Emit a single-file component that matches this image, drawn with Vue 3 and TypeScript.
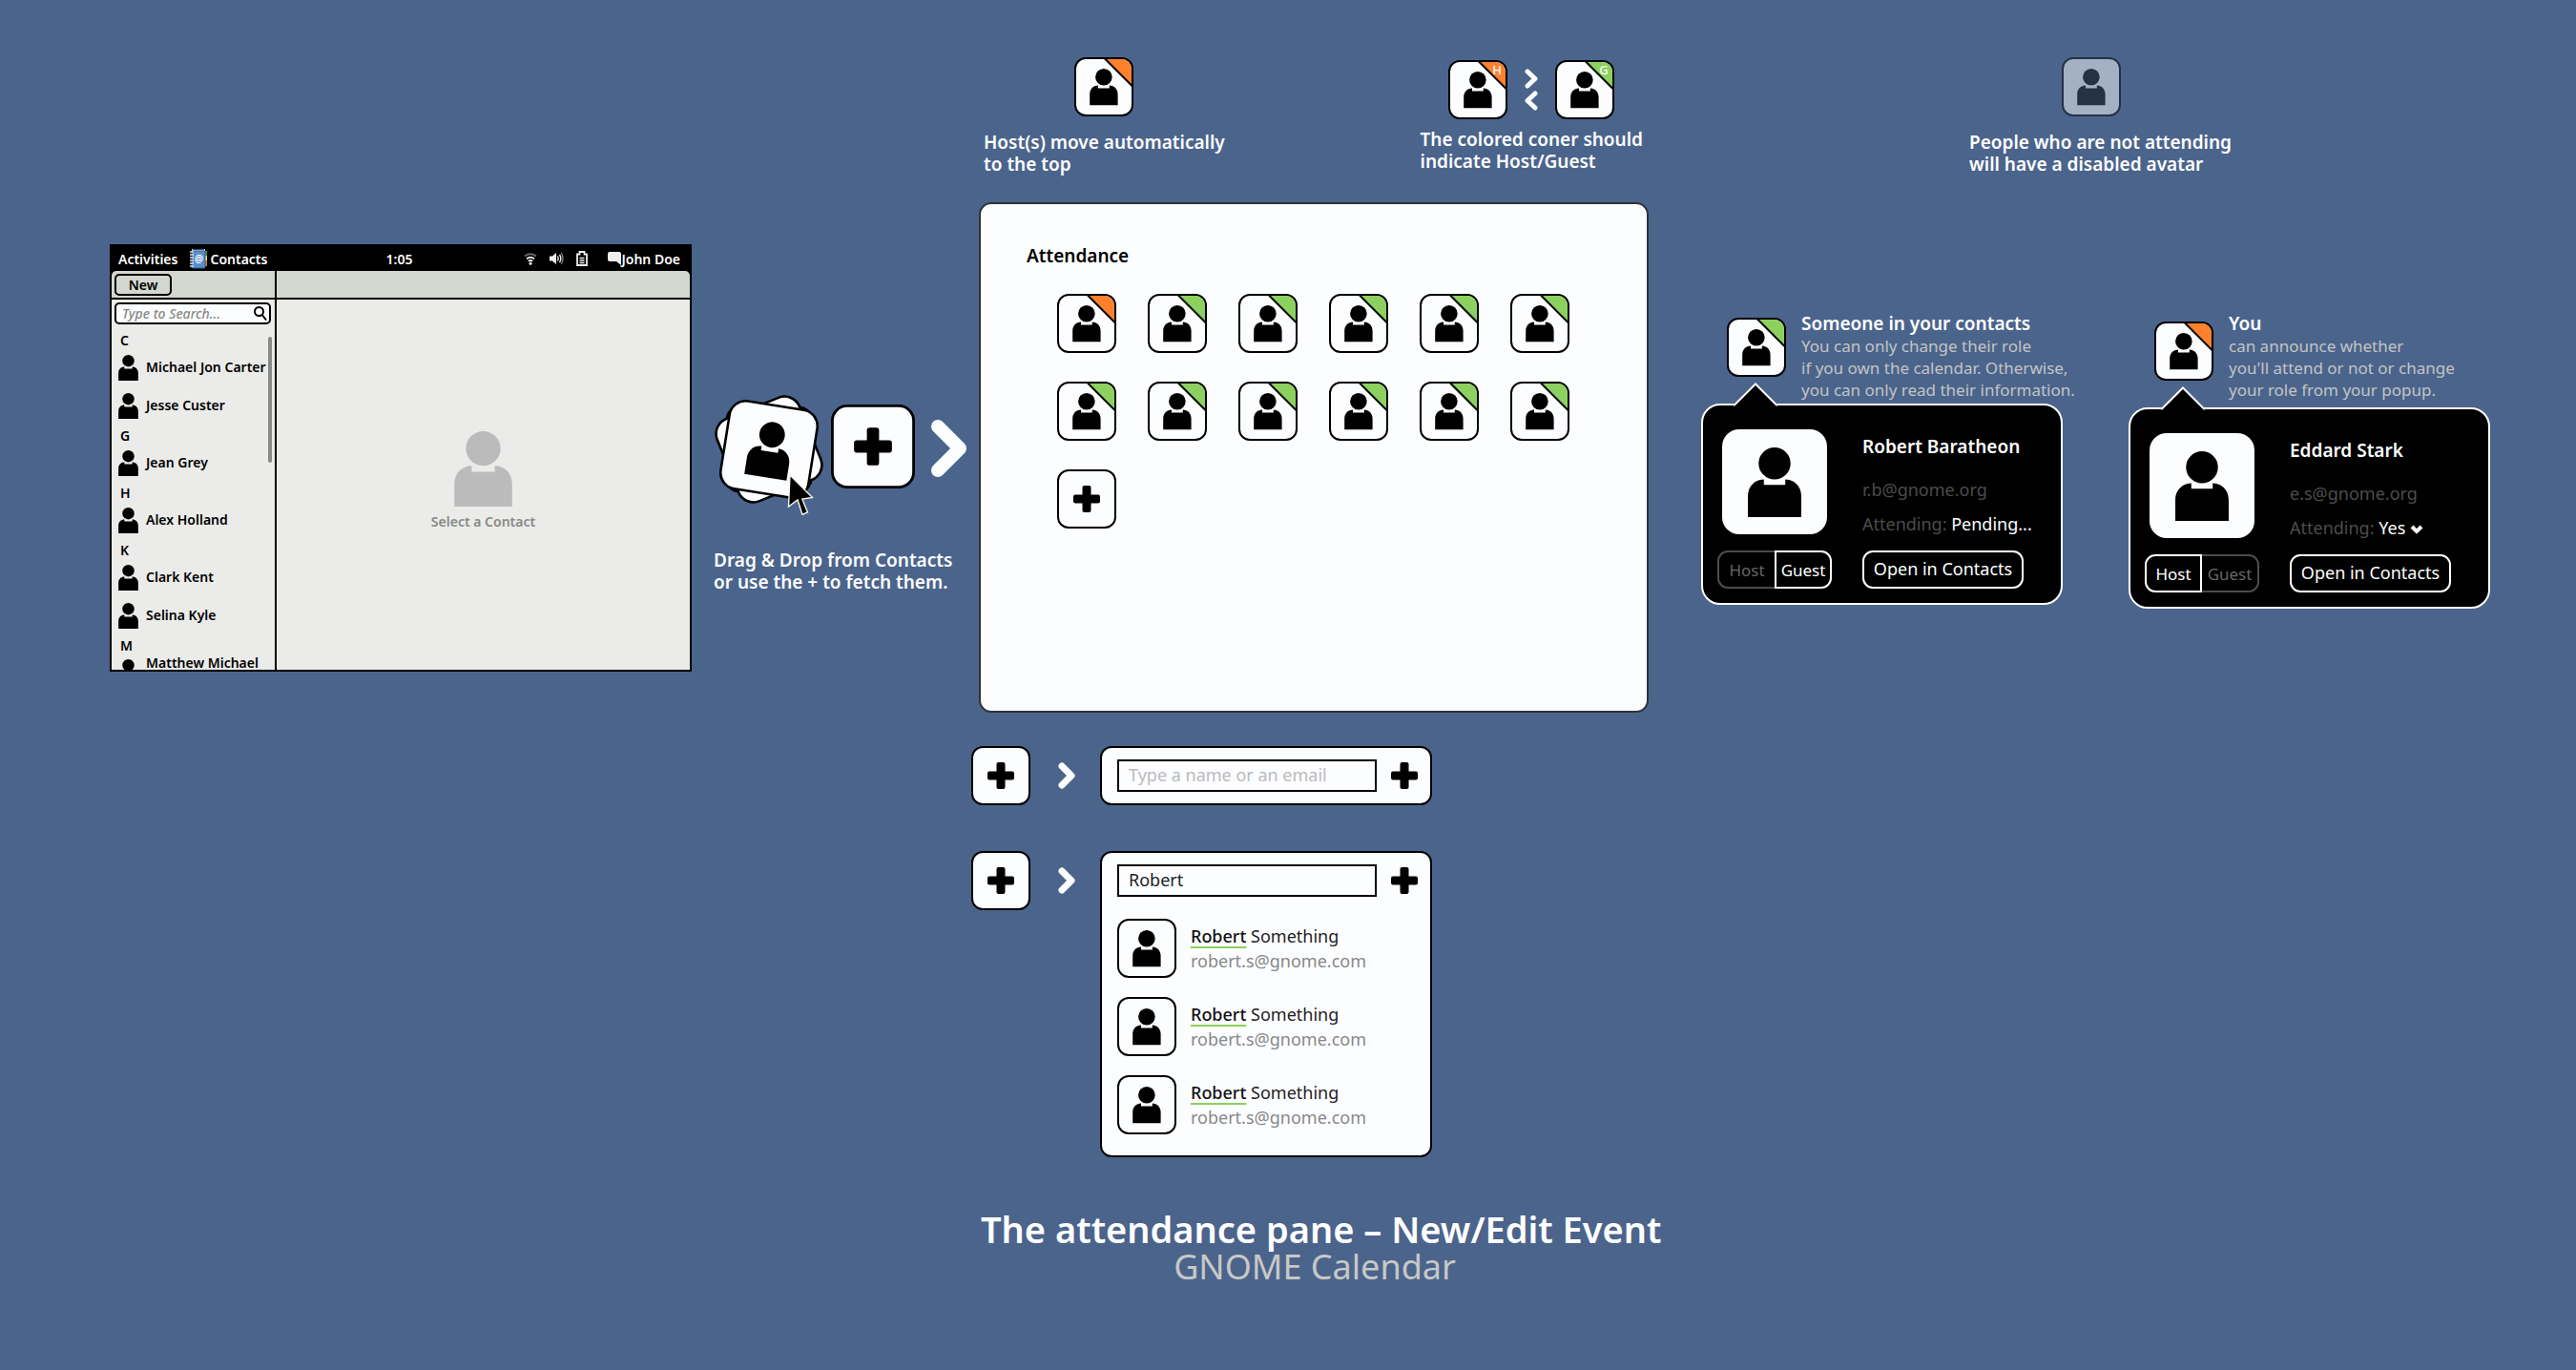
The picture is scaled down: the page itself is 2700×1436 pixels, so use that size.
<script setup lang="ts">
import { defineComponent, h, ref } from 'vue'

type Role = 'host' | 'guest'

const roleColor: Record<Role, string> = { host: '#ff812d', guest: '#8cd15f' }

const BODY = 'M0 218V152C0 122 22 100 50 100V117H117V100C145 100 167 122 167 152V218Z'

const personShapes = () => [
  h('circle', { cx: 83.5, cy: 50, r: 50 }),
  h('path', { d: BODY }),
]

const Person = defineComponent({
  setup: () => () => h('svg', { viewBox: '0 0 167 218', fill: 'currentColor', 'aria-hidden': 'true' }, personShapes()),
})

const tile = () => h('rect', { x: 1, y: 1, width: 60, height: 60, rx: 11, fill: '#fcfdff', stroke: '#000', 'stroke-width': 2 })

const Avatar = defineComponent({
  props: { role: String, letter: String },
  setup: (props) => () => h('svg', { viewBox: '0 0 62 62', 'aria-hidden': 'true' }, [
    tile(),
    h('g', { transform: 'translate(16.2 12) scale(.176)' }, personShapes()),
    props.role
      ? h('g', [
          h('path', { d: 'M32 2H50A10 10 0 0 1 60 12V30Z', fill: roleColor[props.role as Role] }),
          h('path', { d: 'M32 1.5L60.5 30', stroke: '#000', 'stroke-width': 2 }),
        ])
      : null,
    props.letter
      ? h('text', { x: 51, y: 15, 'text-anchor': 'middle', fill: '#fff', 'font-size': 13, 'font-weight': 500 }, props.letter)
      : null,
  ]),
})

const PlusTile = defineComponent({
  setup: () => () => h('svg', { viewBox: '0 0 62 62', 'aria-hidden': 'true' }, [
    tile(),
    h('rect', { x: 17, y: 26.5, width: 28, height: 9, rx: 2 }),
    h('rect', { x: 26.5, y: 17, width: 9, height: 28, rx: 2 }),
  ]),
})

const groups = [
  { letter: 'C', names: ['Michael Jon Carter', 'Jesse Custer'] },
  { letter: 'G', names: ['Jean Grey'] },
  { letter: 'H', names: ['Alex Holland'] },
  { letter: 'K', names: ['Clark Kent', 'Selina Kyle'] },
  { letter: 'M', names: ['Matthew Michael'] },
]

const attendees: Role[] = ['host', ...Array<Role>(11).fill('guest')]

const contactSearch = ref('')
const emptyQuery = ref('')
const query = ref('Robert')
const attending = ref('Yes')

const results = [1, 2, 3].map((id) => ({ id, match: 'Robert', rest: 'Something', email: 'robert.s@gnome.com' }))

const people: { id: string; title: string; lines: string[]; name: string; email: string; role: Role; editable: boolean }[] = [
  {
    id: 'contact',
    title: 'Someone in your contacts',
    lines: ['You can only change their role', 'if you own the calendar. Otherwise,', 'you can only read their information.'],
    name: 'Robert Baratheon',
    email: 'r.b@gnome.org',
    role: 'guest',
    editable: false,
  },
  {
    id: 'you',
    title: 'You',
    lines: ['can announce whether', "you'll attend or not or change", 'your role from your popup.'],
    name: 'Eddard Stark',
    email: 'e.s@gnome.org',
    role: 'host',
    editable: true,
  },
]
</script>

<template>
  <main class="board">
    <div class="notes">
      <section class="note">
        <Avatar class="avatar" role="host" />
        <p class="caption">Host(s) move automatically<br />to the top</p>
      </section>
      <section class="note note-roles">
        <div class="swap">
          <Avatar class="avatar" role="host" letter="H" />
          <svg class="swap-arrows" viewBox="0 0 14 44" aria-hidden="true">
            <path d="M3 3L11 10.500L3 18M11 26L3 33.500L11 41" />
          </svg>
          <Avatar class="avatar" role="guest" letter="G" />
        </div>
        <p class="caption">The colored coner should<br />indicate Host/Guest</p>
      </section>
    </div>

    <section class="note note-disabled">
      <Avatar class="avatar disabled" />
      <p class="caption">People who are not attending<br />will have a disabled avatar</p>
    </section>

    <section class="contacts">
      <header class="topbar">
        <div class="topbar-left">
          <span>Activities</span>
          <span class="app">
            <svg class="book" viewBox="0 0 20 22" aria-hidden="true">
              <path d="M14 3h5v5h-5z" fill="#4e9a06" /><path d="M14 8h5v5h-5z" fill="#fce94f" />
              <path d="M14 13h5v6h-5z" fill="#f57900" />
              <rect x="3" y="1" width="14" height="4" fill="#eee" />
              <path d="M4 1h12v1H4z" fill="#204a87" />
              <rect x="3" y="3" width="14" height="18" rx="1" fill="#5a8fcd" stroke="#2a5a9c" />
              <path d="M1 4h4M1 7h4M1 10h4M1 13h4M1 16h4M1 19h4" stroke="#ddd" stroke-width="1.500" />
              <text x="10.500" y="15" text-anchor="middle" font-size="10" fill="#fff">@</text>
            </svg>
            <span>Contacts</span>
          </span>
        </div>
        <span>1:05</span>
        <div class="topbar-right">
          <svg class="wifi" viewBox="0 0 14 14" aria-hidden="true">
            <g fill="none" stroke-width="1.800">
              <path d="M1 4.500Q7 0 13 4.500" stroke="#666" />
              <path d="M3 7.200Q7 4.300 11 7.200" stroke="#eee" />
              <path d="M4.800 9.800Q7 8.200 9.200 9.800" stroke="#eee" />
            </g>
            <circle cx="7" cy="12.300" r="1.500" fill="#eee" />
          </svg>
          <svg class="volume" viewBox="0 0 15 14" aria-hidden="true">
            <path d="M0 4.500h3L7 1v12L3 9.500H0z" fill="#eee" />
            <g fill="none" stroke-width="1.400">
              <path d="M8.500 4.500q1.500 2.500 0 5" stroke="#eee" />
              <path d="M10.500 2.800q2.600 4.200 0 8.400" stroke="#eee" />
              <path d="M12.300 1.200q3.400 5.800 0 11.600" stroke="#777" />
            </g>
          </svg>
          <svg class="battery" viewBox="0 0 12 16" aria-hidden="true">
            <path d="M3.500 3.500V1h5v2.500H11V15H1V3.500z" fill="none" stroke="#eee" stroke-width="1.800" />
            <path d="M3.500 7.500h5M3.500 10h5M3.500 12.500h5" stroke="#eee" stroke-width="1.400" />
          </svg>
          <span class="user">
            <svg class="chat" viewBox="0 0 14 14" aria-hidden="true">
              <path d="M2 0h10q2 0 2 2v12L9 10H2Q0 10 0 8V2Q0 0 2 0z" fill="#eee" />
            </svg>
            <span>John Doe</span>
          </span>
        </div>
      </header>
      <div class="window">
        <div class="toolbar toolbar-left"><button type="button" class="new">New</button></div>
        <div class="toolbar toolbar-right"></div>
        <aside class="sidebar">
          <label class="find">
            <input v-model="contactSearch" type="text" placeholder="Type to Search..." aria-label="Search contacts" />
            <svg viewBox="0 0 14 16" aria-hidden="true">
              <circle cx="5.500" cy="5.500" r="4.500" /><path d="M8.800 9L13 14.500" />
            </svg>
          </label>
          <div class="list">
            <div v-for="group in groups" :key="group.letter" class="group">
              <h3>{{ group.letter }}</h3>
              <ul>
                <li v-for="name in group.names" :key="name" :class="{ peek: group.letter === 'M' }">
                  <Person class="mini" /><span>{{ name }}</span>
                </li>
              </ul>
            </div>
            <span class="scroll"></span>
          </div>
        </aside>
        <div class="empty">
          <Person class="ghost" />
          <p>Select a Contact</p>
        </div>
      </div>
    </section>

    <section class="drag">
      <div class="drag-row">
        <svg class="stack" viewBox="0 0 116 126" aria-hidden="true">
          <g fill="#fcfdff" stroke="#000" stroke-width="2.600">
            <rect x="12.500" y="11.500" width="91" height="91" rx="17" transform="rotate(2 58 57)" />
            <rect x="11.500" y="10.500" width="93" height="93" rx="17" transform="rotate(-22 58 57)" />
            <rect x="11.500" y="10.500" width="93" height="93" rx="17" transform="rotate(9 58 57)" />
          </g>
          <g transform="rotate(9 58 57) translate(36.500 28) scale(.268)">
            <circle cx="83.500" cy="50" r="50" /><path :d="BODY" />
          </g>
          <path
            d="M80 84L78.500 117L88 110L93 125.500L98.500 123L92.800 109L103.500 107.500Z"
            fill="#000" stroke="#f4f4ee" stroke-width="1.400"
          />
        </svg>
        <PlusTile class="plus-big" />
        <svg class="arrow-big" viewBox="0 0 38 60" aria-hidden="true"><path d="M7 7L30 30L7 53" /></svg>
      </div>
      <p class="caption">Drag &amp; Drop from Contacts<br />or use the + to fetch them.</p>
    </section>

    <section class="panel">
      <h2>Attendance</h2>
      <div class="attendees">
        <Avatar v-for="(role, i) in attendees" :key="i" class="avatar" :role="role" />
        <button type="button" class="plain" aria-label="Add attendee"><PlusTile class="avatar" /></button>
      </div>
    </section>

    <section v-for="p in people" :key="p.id" class="person" :class="'person-' + p.id">
      <div class="intro">
        <Avatar class="avatar" :role="p.role" />
        <div class="about">
          <h3>{{ p.title }}</h3>
          <p v-for="line in p.lines" :key="line">{{ line }}</p>
        </div>
      </div>
      <div class="card">
        <svg class="tip" viewBox="0 0 46 26" aria-hidden="true">
          <path d="M1 26V23.500L23 1.500L45 23.500V26Z" fill="#000" />
          <path d="M0 23.500H1L23 1.500L45 23.500H46" fill="none" stroke="#fff" stroke-width="2" />
        </svg>
        <div class="card-left">
          <div class="portrait"><Person /></div>
          <div class="roles">
            <button type="button" :class="{ on: p.role === 'host' }">Host</button>
            <button type="button" :class="{ on: p.role === 'guest' }">Guest</button>
          </div>
        </div>
        <div class="card-right">
          <h4>{{ p.name }}</h4>
          <p class="mail">{{ p.email }}</p>
          <p v-if="!p.editable" class="status">Attending: <span>Pending...</span></p>
          <p v-else class="status">
            <label for="attending">Attending: </label>
            <span class="choice">
              <select id="attending" v-model="attending"><option>Yes</option><option>No</option></select>
              <svg viewBox="0 0 14 10" aria-hidden="true"><path d="M2 2L7 7L12 2" /></svg>
            </span>
          </p>
          <button type="button" class="open">Open in Contacts</button>
        </div>
      </div>
    </section>

    <section class="lookup">
      <div class="step">
        <button type="button" class="plain" aria-label="Add"><PlusTile class="avatar" /></button>
        <svg class="arrow" viewBox="0 0 18 28" aria-hidden="true"><path d="M4 4L14 14L4 24" /></svg>
        <div class="box">
          <div class="entry">
            <input v-model="emptyQuery" type="text" placeholder="Type a name or an email" aria-label="Name or email" />
            <button type="button" class="plain" aria-label="Add person">
              <svg class="plus" viewBox="0 0 28 28" aria-hidden="true">
                <rect y="9.500" width="28" height="9" rx="2" /><rect x="9.500" width="9" height="28" rx="2" />
              </svg>
            </button>
          </div>
        </div>
      </div>
      <div class="step">
        <button type="button" class="plain" aria-label="Add"><PlusTile class="avatar" /></button>
        <svg class="arrow" viewBox="0 0 18 28" aria-hidden="true"><path d="M4 4L14 14L4 24" /></svg>
        <div class="box">
          <div class="entry">
            <input v-model="query" type="text" aria-label="Name or email" />
            <button type="button" class="plain" aria-label="Add person">
              <svg class="plus" viewBox="0 0 28 28" aria-hidden="true">
                <rect y="9.500" width="28" height="9" rx="2" /><rect x="9.500" width="9" height="28" rx="2" />
              </svg>
            </button>
          </div>
          <ul class="results">
            <li v-for="r in results" :key="r.id">
              <Avatar class="avatar" />
              <div>
                <p class="result-name"><mark>{{ r.match }}</mark> {{ r.rest }}</p>
                <p class="result-mail">{{ r.email }}</p>
              </div>
            </li>
          </ul>
        </div>
      </div>
    </section>

    <footer class="title">
      <h1>The attendance pane – New/Edit Event</h1>
      <p>GNOME Calendar</p>
    </footer>
  </main>
</template>

<style>
html,
body {
  margin: 0;
  background: #4b648c;
}
</style>

<style scoped>
.board {
  display: grid;
  grid-template-columns:
    115fr minmax(0, 610fr) 23fr minmax(0, 278fr) minmax(0, 702fr)
    55fr minmax(0, 379fr) 69fr minmax(0, 379fr) 90fr;
  align-items: start;
  align-content: start;
  min-height: 100vh;
  box-sizing: border-box;
  padding: 60px 0 48px;
  color: #fff;
  font-family: "Noto Sans", "Open Sans", sans-serif;
  font-size: 18px;
}
h1, h2, h3, h4, p, ul {
  margin: 0;
  padding: 0;
}
ul {
  list-style: none;
}
svg {
  display: block;
  flex: none;
}
button, input, select {
  font: inherit;
  color: inherit;
  margin: 0;
  box-sizing: border-box;
}
.plain {
  padding: 0;
  border: 0;
  background: none;
  color: #000;
}
.avatar {
  width: 62px;
  height: 62px;
}
.caption {
  font-size: 19px;
  font-weight: 600;
  line-height: 23px;
  white-space: nowrap;
}

.notes {
  grid-column: 5;
  grid-row: 1;
  display: flex;
  justify-content: space-between;
  padding: 0 6px 0 5px;
  margin-bottom: 28px;
}
.note {
  display: flex;
  flex-direction: column;
  align-items: center;
  gap: 16px;
}
.note-roles {
  gap: 10px;
  padding-top: 3px;
}
.note-disabled {
  grid-column: 7 / 10;
  grid-row: 1;
  padding-left: 10px;
}
.disabled {
  margin-right: 20px;
  opacity: 0.5;
}
.swap {
  display: flex;
  align-items: center;
  gap: 18px;
}
.swap-arrows {
  width: 14px;
  height: 44px;
}
.swap-arrows path, .arrow path, .arrow-big path {
  fill: none;
  stroke: #fcfdff;
  stroke-linecap: round;
  stroke-linejoin: round;
  stroke-width: 5;
}

.contacts {
  grid-column: 2;
  grid-row: 2;
  margin-top: 44px;
  border: 2px solid #000;
  background: #000;
  font-size: 14px;
  font-weight: 600;
}
.topbar {
  display: grid;
  grid-template-columns: 1fr auto 1fr;
  align-items: center;
  height: 26px;
  padding: 0 10px 0 7px;
}
.topbar-left, .topbar-right, .app, .user {
  display: flex;
  align-items: center;
}
.topbar-left {
  gap: 12px;
}
.topbar-right {
  justify-content: flex-end;
  gap: 13px;
}
.app {
  gap: 2px;
}
.user {
  margin-left: 8px;
}
.book {
  width: 20px;
  height: 22px;
}
.wifi, .chat {
  width: 14px;
  height: 14px;
}
.volume {
  width: 15px;
  height: 14px;
}
.battery {
  width: 12px;
  height: 16px;
}
.window {
  display: grid;
  grid-template-columns: 171px 1fr;
  grid-template-rows: 30px 388px;
  color: #000;
}
.toolbar {
  box-sizing: border-box;
  border-bottom: 2px solid #000;
  background: #d3d7cf;
}
.toolbar-left {
  padding: 3px;
  border-top-left-radius: 5px;
}
.toolbar-right {
  border-left: 2px solid #000;
  border-top-right-radius: 5px;
}
.new {
  display: block;
  width: 60px;
  height: 23px;
  padding: 0;
  border: 2px solid #000;
  border-radius: 5px;
  background: none;
  line-height: 18px;
}
.sidebar {
  display: flex;
  flex-direction: column;
  overflow: hidden;
  background: #ebebe9;
}
.find {
  display: flex;
  align-items: center;
  box-sizing: border-box;
  flex: none;
  width: 164px;
  height: 23px;
  margin: 3px 0 0 3px;
  padding: 0 2px 0 6px;
  border: 2px solid #000;
  border-radius: 5px;
  background: #fcfdff;
}
.find input {
  flex: 1;
  min-width: 0;
  height: 19px;
  padding: 0;
  border: 0;
  outline: 0;
  background: none;
  font-style: italic;
  font-weight: 500;
}
.find input::placeholder {
  color: #888a85;
}
.find svg {
  width: 14px;
  height: 16px;
  fill: none;
  stroke: #000;
  stroke-width: 2;
}
.list {
  position: relative;
  display: flex;
  flex-direction: column;
  gap: 8px;
  padding: 7px 0 0 7px;
}
.scroll {
  position: absolute;
  top: 13px;
  right: 3px;
  width: 4px;
  height: 132px;
  border-radius: 2px;
  background: #888a85;
}
.group h3 {
  margin-bottom: 4px;
  padding-left: 2px;
  font-size: 14px;
  font-weight: 600;
  line-height: 20px;
}
.group ul {
  display: flex;
  flex-direction: column;
  gap: 12px;
}
.group li {
  display: flex;
  align-items: center;
  gap: 8px;
  height: 28px;
  line-height: 18px;
  white-space: nowrap;
}
.group .peek {
  align-items: flex-start;
  line-height: 8px;
}
.mini {
  width: 21px;
  height: 27px;
}
.empty {
  display: flex;
  flex-direction: column;
  align-items: center;
  gap: 6px;
  padding-top: 138px;
  border-left: 2px solid #000;
  background: #ebebe9;
  color: #888a85;
  line-height: 20px;
}
.ghost {
  width: 61px;
  height: 79px;
  color: #bbb;
}

.drag {
  grid-column: 4;
  grid-row: 2;
  margin-top: 202px;
}
.drag-row {
  display: flex;
  align-items: flex-start;
  margin-bottom: 36px;
}
.stack {
  width: 116px;
  height: 126px;
}
.plus-big {
  width: 88px;
  height: 88px;
  margin: 10px 17px 0 7px;
}
.arrow-big {
  width: 38px;
  height: 60px;
  margin-top: 26px;
}
.arrow-big path {
  stroke-width: 14;
}

.panel {
  grid-column: 5;
  grid-row: 2;
  padding: 42px 80px 191px;
  border: 2px solid #2e3436;
  border-radius: 13px;
  background: #fcfdff;
  color: #000;
}
.panel h2 {
  margin: 0 0 28px -32px;
  font-size: 19px;
  font-weight: 600;
  line-height: 24px;
}
.attendees {
  display: grid;
  grid-template-columns: repeat(6, 62px);
  gap: 30px 33px;
}

.person {
  grid-row: 2;
  margin-top: 116px;
}
.person-contact {
  grid-column: 7;
}
.person-you {
  grid-column: 9;
}
.intro {
  display: flex;
  gap: 16px;
  height: 95px;
  padding-left: 27px;
}
.intro .avatar {
  margin-top: 5px;
}
.person-you .intro {
  height: 99px;
}
.person-you .intro .avatar {
  margin-top: 9px;
}
.about {
  font-size: 17px;
  line-height: 23px;
  white-space: nowrap;
  color: #c3c4c3;
}
.about h3 {
  font-size: 19px;
  font-weight: 600;
  color: #fff;
}
.card {
  position: relative;
  display: flex;
  gap: 32px;
  padding: 25px 15px 15px;
  border: 2px solid #fff;
  border-radius: 20px;
  background: #000;
}
.tip {
  position: absolute;
  top: -24px;
  left: 32px;
  width: 46px;
  height: 26px;
}
.card-left {
  display: flex;
  flex-direction: column;
  align-items: center;
  gap: 17px;
  width: 120px;
}
.portrait {
  display: flex;
  justify-content: center;
  box-sizing: border-box;
  width: 110px;
  height: 110px;
  padding-top: 19px;
  border-radius: 18px;
  background: #fcfdff;
  color: #000;
}
.portrait svg {
  width: 56px;
  height: 73px;
}
.roles {
  display: flex;
  width: 120px;
}
.roles button {
  width: 60px;
  height: 40px;
  padding: 0;
  border: 2px solid #4c4c4c;
  background: none;
  color: #666;
  font-size: 17px;
}
.roles button:first-child {
  border-right: 0;
  border-radius: 11px 0 0 11px;
}
.roles button:last-child {
  border-left: 0;
  border-radius: 0 11px 11px 0;
}
.roles button.on {
  border: 2px solid #fff;
  color: #fff;
}
.card-right {
  display: flex;
  flex-direction: column;
  align-items: flex-start;
  padding-top: 6px;
  line-height: 24px;
  white-space: nowrap;
}
.card-right h4 {
  margin-bottom: 21px;
  font-size: 19px;
  font-weight: 600;
}
.mail {
  margin-bottom: 12px;
  color: #4c4c4c;
}
.status {
  margin-bottom: 16px;
  color: #4c4c4c;
}
.status span {
  color: #fff;
}
.choice {
  position: relative;
}
.choice select {
  appearance: none;
  height: 24px;
  padding: 0 18px 0 0;
  border: 0;
  background: none;
}
.choice svg {
  position: absolute;
  top: 9px;
  right: 0;
  width: 14px;
  height: 10px;
  fill: none;
  stroke: #fff;
  stroke-width: 4;
  pointer-events: none;
}
.open {
  width: 169px;
  height: 40px;
  padding: 0 0 3px;
  border: 2px solid #fff;
  border-radius: 11px;
  background: none;
}

.lookup {
  grid-column: 5;
  grid-row: 3;
  display: flex;
  flex-direction: column;
  gap: 48px;
  margin: 35px 0 0 -8px;
}
.step {
  display: flex;
  align-items: flex-start;
}
.arrow {
  width: 18px;
  height: 28px;
  margin: 17px 26px 0 29px;
}
.arrow path {
  stroke-width: 7;
}
.box {
  padding: 12px 13px 12px 16px;
  border: 2px solid #000;
  border-radius: 12px;
  background: #fcfdff;
  color: #222;
}
.entry {
  display: flex;
  align-items: center;
  gap: 15px;
}
.entry input {
  width: 272px;
  height: 34px;
  padding: 0 10px 3px;
  border: 2px solid #000;
  outline: 0;
  background: #fcfdff;
}
.entry input::placeholder {
  color: #bbb;
}
.plus {
  width: 28px;
  height: 28px;
}
.results {
  display: flex;
  flex-direction: column;
  gap: 20px;
  padding: 23px 0 10px;
}
.results li {
  display: flex;
  align-items: center;
  gap: 15px;
  line-height: 26px;
}
.results mark {
  background: none;
  color: #111;
  font-weight: 500;
  text-decoration: underline 2px #8cd15f;
  text-decoration-skip-ink: none;
  text-underline-offset: 4px;
}
.result-mail {
  color: #888;
}

.title {
  grid-column: 5;
  grid-row: 4;
  margin-top: 55px;
  padding-left: 2px;
  line-height: 40px;
  white-space: nowrap;
}
.title h1 {
  font-size: 38px;
  font-weight: 600;
}
.title p {
  font-size: 36px;
  text-align: center;
  color: #c8c8c6;
}
</style>
